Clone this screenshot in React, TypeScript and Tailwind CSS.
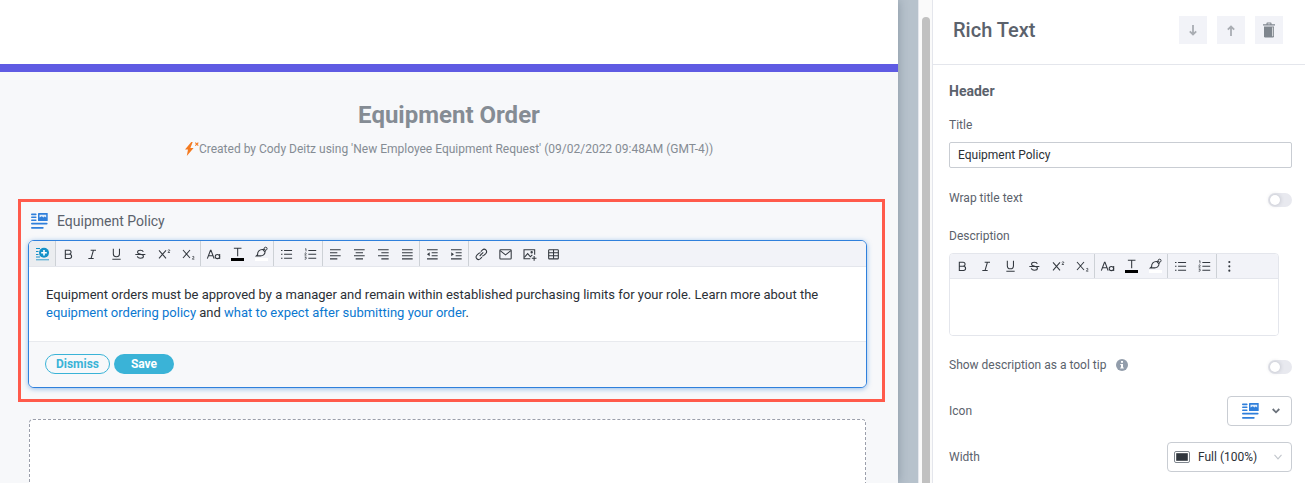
import React, { useState } from 'react';
import clsx from 'clsx';

type Tool = { label: string; icon: React.ReactNode; active?: boolean };

const glyph = (children: React.ReactNode) => (
  <svg
    viewBox="0 0 24 24"
    className="h-4 w-4 shrink-0"
    fill="none"
    stroke="currentColor"
    strokeWidth={1.6}
    aria-hidden="true"
  >
    {children}
  </svg>
);

const bold: Tool = {
  label: 'Bold',
  icon: glyph(<path d="M8 6.300h5.600a3 3 0 0 1 0 6H8zM8 12.300h6.200a3.200 3.200 0 0 1 0 6.400H8z" />),
};
const italic: Tool = { label: 'Italic', icon: glyph(<path d="M10 6.300h8M6.500 18.700h8M14.200 6.300l-3.600 12.400" />) };
const underline: Tool = {
  label: 'Underline',
  icon: glyph(<path d="M8 4.300v7.200a4.600 4.600 0 0 0 9.200 0V4.300M6.500 19.900H19" />),
};
const strike: Tool = {
  label: 'Strikethrough',
  icon: glyph(
    <path d="M5 12.700h15M16.900 8.800c-.3-1.700-2-2.500-4.200-2.500-2.600 0-4.400 1.100-4.400 2.900 0 1.500 1.300 2.300 3.600 2.900l2.100.6c2.100.5 3.200 1.300 3.200 2.600 0 1.900-1.800 3-4.500 3-2.500 0-4.400-1-4.700-2.900" />,
  ),
};
const superscript: Tool = {
  label: 'Superscript',
  icon: glyph(
    <>
      <path d="M4.500 6.500l10.500 12M15 6.500l-10.500 12" />
      <path d="M18 6.500c.3-1.200 2.700-1.200 2.600.2 0 1.100-2.300 1.500-2.600 3h3" strokeWidth={1.2} />
    </>,
  ),
};
const subscript: Tool = {
  label: 'Subscript',
  icon: glyph(
    <>
      <path d="M4.500 6l10.500 12M15 6l-10.500 12" />
      <path d="M18.500 16.500c.3-1.200 2.700-1.200 2.600.2 0 1.100-2.300 1.500-2.600 3h3" strokeWidth={1.2} />
    </>,
  ),
};
const fontFamily: Tool = {
  label: 'Font Family',
  icon: glyph(
    <>
      <path d="M3.500 19L8.200 6.500h.8L13.700 19M5.200 14.500h6.800" />
      <path d="M22 12v7.500" />
      <ellipse cx="18.600" cy="15.800" rx="3.300" ry="3.100" />
    </>,
  ),
};
const textColor: Tool = {
  label: 'Text Color',
  icon: glyph(
    <>
      <path d="M7.300 3.500h11.400M13 3.500v12" />
      <path d="M3 18h19.500v4.500H3z" fill="#000" stroke="none" />
    </>,
  ),
};
const backgroundColor: Tool = {
  label: 'Background Color',
  icon: glyph(
    <>
      <path d="M5 14.800l1.900-1.700c-.4-4.300 3-8.200 7.500-7.900l3.500 3.700c.5 3.500-3.400 6.300-7.300 5.900z" />
      <circle cx="18.900" cy="4" r="2.200" strokeWidth={1.5} />
      <path d="M14.700 5.300l2.400-.4M17.900 8.800l.7-2.600" />
      <path d="M3 18h19.500v4.500H3z" fill="#fff" stroke="none" />
    </>,
  ),
};
const bullets: Tool = {
  label: 'Unordered List',
  icon: glyph(<path d="M4.500 6.700h2.200M4.500 12.500h2.200M4.500 18.300h2.200M9.100 6.700h12M9.100 12.500h12M9.100 18.300h12" />),
};
const numbers: Tool = {
  label: 'Ordered List',
  icon: glyph(
    <>
      <path d="M9.500 6.700h11.800M9.500 12.500h11.800M9.500 18.300h11.800" />
      <path
        d="M4.500 4.800l1.500-.8v4M4 11c.3-1 2.400-1 2.300.2 0 .9-2 1.400-2.200 2.500h2.600M4 16.500h2.500l-1.300 1.500c2 .2 1.600 2.500-1.200 1.800"
        strokeWidth={1.1}
      />
    </>,
  ),
};
const alignLeft: Tool = { label: 'Align Left', icon: glyph(<path d="M4.500 5.500h16M4.500 10.100h11M4.500 14.700h16M4.500 19.300h11" />) };
const alignCenter: Tool = {
  label: 'Align Center',
  icon: glyph(<path d="M4.500 5.500h16M7 10.100h11M4.500 14.700h16M7 19.300h11" />),
};
const alignRight: Tool = { label: 'Align Right', icon: glyph(<path d="M4.500 5.500h16M9.500 10.100h11M4.500 14.700h16M9.500 19.300h11" />) };
const alignJustify: Tool = {
  label: 'Align Justify',
  icon: glyph(<path d="M4.500 5.500h16M4.500 10.100h16M4.500 14.700h16M4.500 19.300h16" />),
};
const outdent: Tool = {
  label: 'Decrease Indent',
  icon: glyph(
    <>
      <path d="M4.500 5.500h16M11.500 10.100h9M11.500 14.700h9M4.500 19.300h16" />
      <path d="M8.500 9.300v6.200l-4-3.100z" fill="currentColor" stroke="none" />
    </>,
  ),
};
const indent: Tool = {
  label: 'Increase Indent',
  icon: glyph(
    <>
      <path d="M4.500 5.500h16M11.500 10.100h9M11.500 14.700h9M4.500 19.300h16" />
      <path d="M4.900 9.300v6.200l4-3.100z" fill="currentColor" stroke="none" />
    </>,
  ),
};
const link: Tool = {
  label: 'Insert Link',
  icon: glyph(
    <path d="M10 15l5.400-5.400M11.700 8.300l2.600-2.600a3.700 3.700 0 0 1 5.200 5.200l-3.200 3.100c-.8.700-1.700 1-2.600.9M13.500 16.700l-2.800 2.700a3.700 3.700 0 0 1-5.200-5.200l3.200-3.100c.8-.7 1.700-1 2.600-.9" />,
  ),
};
const mail: Tool = {
  label: 'Insert Email',
  icon: glyph(
    <>
      <rect x="4.300" y="5.500" width="17" height="14" rx="1.200" />
      <path d="M4.700 7l8.100 6.200L20.900 7" />
    </>,
  ),
};
const image: Tool = {
  label: 'Insert Image',
  icon: glyph(
    <>
      <path d="M14 19H4.500V5.500h16V13" />
      <path d="M5 17l5-5.500 4 4.600 3-2.800" />
      <circle cx="16" cy="9.300" r="1" />
      <path d="M19.700 15v7M16.200 18.500h7" />
    </>,
  ),
};
const table: Tool = {
  label: 'Insert Table',
  icon: glyph(
    <>
      <rect x="5.500" y="5.500" width="14.500" height="13.800" rx="1" />
      <path d="M5.500 10.100H20M5.500 14.700H20M12.800 5.500v13.800" />
    </>,
  ),
};
const more: Tool = {
  label: 'More',
  icon: glyph(
    <g fill="currentColor" stroke="none">
      <circle cx="12.500" cy="6" r="1.600" />
      <circle cx="12.500" cy="12.500" r="1.600" />
      <circle cx="12.500" cy="19" r="1.600" />
    </g>,
  ),
};
const insertField: Tool = {
  label: 'Insert Field',
  active: true,
  icon: (
    <svg viewBox="0 0 16 16" className="h-4 w-4 shrink-0 text-[#1491c8]" fill="none" stroke="currentColor" aria-hidden="true">
      <path d="M2 2.500h4M2 5.500h2.500M2 8.500h2.500M2 11h4" />
      <circle cx="10" cy="6.700" r="5" fill="currentColor" stroke="none" />
      <path d="M10 3.900v5.600M7.200 6.700h5.600" stroke="#fff" strokeWidth={1.6} />
      <path d="M2 13.700h13" strokeWidth={1.4} opacity={0.6} />
    </svg>
  ),
};

const textGroup = [bold, italic, underline, strike, superscript, subscript];
const colorGroup = [fontFamily, textColor, backgroundColor];
const listGroup = [bullets, numbers];

const fullToolbar = [
  [insertField],
  textGroup,
  colorGroup,
  listGroup,
  [alignLeft, alignCenter, alignRight, alignJustify],
  [outdent, indent],
  [link, mail, image, table],
];
const compactToolbar = [textGroup, colorGroup, listGroup, [more]];

function Toolbar({ groups, compact }: { groups: Tool[][]; compact?: boolean }) {
  return (
    <div role="toolbar" className="flex border-b border-[#e4e6ec] bg-[#f2f3f8] text-[#33383f]">
      {groups.map((tools, i) => (
        <div key={i} className={clsx('flex', i < groups.length - 1 && 'border-r border-[#cdd1d6]')}>
          {tools.map((tool) => (
            <button
              key={tool.label}
              type="button"
              title={tool.label}
              aria-label={tool.label}
              className={clsx(
                'flex items-center justify-center',
                compact ? 'h-6' : 'h-[25px]',
                tool.active ? 'w-[26px] bg-[#ebedf0]' : 'w-6',
              )}
            >
              {tool.icon}
            </button>
          ))}
        </div>
      ))}
    </div>
  );
}

function RichTextIcon({ className }: { className?: string }) {
  return (
    <svg viewBox="0 0 17 16" className={clsx('h-4 w-[17px] shrink-0 text-[#2f7fdb]', className)} aria-hidden="true">
      <g fill="currentColor">
        <rect x="0" y=".6" width="5.600" height="1.600" rx=".8" />
        <rect x="0" y="3.500" width="5.600" height="1.600" rx=".8" />
        <rect x="0" y="6.400" width="5.600" height="1.600" rx=".8" />
        <rect x="7" y="0" width="9.700" height="8" rx=".6" />
        <rect x="0" y="9.700" width="16.600" height="1.800" rx=".9" />
        <rect x="0" y="13.900" width="12.700" height="1.800" rx=".9" />
      </g>
      <path d="M8.500 4.600V1.700h6.700v2.900l-1.600-1.200-1.200 1-1.600-1.200z" fill="#fff" opacity=".85" />
    </svg>
  );
}

function Toggle({ id }: { id: string }) {
  const [on, setOn] = useState(false);
  return (
    <input
      id={id}
      type="checkbox"
      checked={on}
      onChange={(e) => setOn(e.target.checked)}
      className="mt-1 flex h-3.5 w-6 appearance-none items-center rounded-full bg-[#e8e9ef] px-0.5 before:h-2.5 before:w-2.5 before:rounded-full before:bg-white before:shadow-[0_0_4px_rgba(60,70,90,0.3)] checked:justify-end checked:bg-[#3ab3d7]"
    />
  );
}

function FormPreview() {
  return (
    <main className="z-10 flex min-w-0 flex-1 flex-col bg-[#f7f8fa] shadow-[0_0_10px_rgba(50,65,85,0.35)]">
      <div className="h-[72px] shrink-0 border-b-8 border-[#5f5be3] bg-white" />
      <header className="mt-[27px] text-center text-[#858c94]">
        <h1 className="text-2xl leading-8 font-bold">Equipment Order</h1>
        <p className="mt-2 flex items-center justify-center text-xs leading-5">
          <svg viewBox="0 0 14 14" className="h-3.5 w-3.5 shrink-0" aria-hidden="true">
            <path d="M6.300 0L0 7.600h3L1.800 14 8.600 5.900H5.400L7.700 0z" fill="#f47a20" />
            <path d="M10.300 .7l3 3M13.300 .7l-3 3" stroke="#f47a20" strokeWidth="1.100" />
          </svg>
          Created by Cody Deitz using 'New Employee Equipment Request' (09/02/2022 09:48AM (GMT-4))
        </p>
      </header>

      <section className="mt-10 mr-[13px] ml-[18px] border-3 border-[#ff5a4b] pt-[7px] pr-[15px] pb-[11px] pl-[7px]">
        <h2 className="flex items-center gap-[9px] pl-[3px] text-sm leading-6 text-[#5b626c]">
          <RichTextIcon />
          Equipment Policy
        </h2>
        <div className="mt-[7px] overflow-hidden rounded-md border border-[#2f80dc] bg-white shadow-[0_1px_5px_rgba(47,128,220,0.5)]">
          <Toolbar groups={fullToolbar} />
          <div
            role="textbox"
            aria-label="Rich text content"
            contentEditable
            suppressContentEditableWarning
            className="px-[17px] py-[19px] text-[13px] leading-[18px] text-[#2b3036] outline-none"
          >
            Equipment orders must be approved by a manager and remain within established purchasing limits for your
            role. Learn more about the{' '}
            <a href="#policy" className="text-[#0b78d0]">equipment ordering policy</a> and{' '}
            <a href="#expect" className="text-[#0b78d0]">what to expect after submitting your order</a>.
          </div>
          <footer className="flex gap-1 border-t border-[#e8eaee] bg-[#f7f8fa] px-4 pt-3 pb-[13px] text-xs font-bold">
            <button type="button" className="h-5 w-[65px] rounded-full border border-[#3ab3d7] text-[#3ab3d7]">
              Dismiss
            </button>
            <button type="button" className="h-5 w-[60px] rounded-full bg-[#3ab3d7] text-white">
              Save
            </button>
          </footer>
        </div>
      </section>

      <div className="mt-[17px] mr-8 ml-[29px] flex-1 rounded-t border border-b-0 border-dashed border-[#9b9fab] bg-white" />
    </main>
  );
}

const headerButton = 'flex h-7 w-7 items-center justify-center bg-[#f2f3f8]';

function SettingsPanel() {
  const [title, setTitle] = useState('Equipment Policy');
  return (
    <aside className="w-[373px] shrink-0 border-l border-[#e4e6ec] bg-white text-xs leading-5 text-[#5b626c]">
      <header className="flex h-[65px] items-center justify-between border-b border-[#e4e6ec] pr-[22px] pb-1 pl-5">
        <h2 className="text-xl font-medium">Rich Text</h2>
        <div className="flex gap-2.5">
          <button type="button" aria-label="Move down" className={headerButton}>
            <svg viewBox="0 0 12 12" className="h-3 w-3" fill="none" stroke="#a9adb3" strokeWidth="1.800">
              <path d="M6 1v9.500M2.800 7.300L6 10.500l3.200-3.200" />
            </svg>
          </button>
          <button type="button" aria-label="Move up" className={headerButton}>
            <svg viewBox="0 0 12 12" className="h-3 w-3" fill="none" stroke="#a9adb3" strokeWidth="1.800">
              <path d="M6 12V2.500M2.800 5.700L6 2.500l3.200 3.200" />
            </svg>
          </button>
          <button type="button" aria-label="Delete" className={headerButton}>
            <svg viewBox="0 0 12 16" className="h-4 w-3" fill="#7f868e">
              <path d="M0 2.200h3.500V1.300Q3.500.5 4.300.5h3.400q.8 0 .8.800v.9H12v1.200H0zM4.600 1.500v.7h2.800v-.7z" />
              <path d="M1 4.500h10v9.700q0 1.300-1.300 1.300H2.300Q1 15.500 1 14.200z" />
              <path d="M9.700 5.300v9" stroke="#fff" strokeWidth=".8" />
            </svg>
          </button>
        </div>
      </header>

      <div className="pt-4 pr-[13px] pl-4">
        <h3 className="text-sm leading-5 font-bold">Header</h3>

        <label htmlFor="title" className="mt-3.5 block">Title</label>
        <input
          id="title"
          value={title}
          onChange={(e) => setTitle(e.target.value)}
          className="mt-[7px] block h-[26px] w-full rounded-xs border border-[#c9cdd3] px-2 text-xs text-[#2b3036]"
        />

        <div className="mt-5 flex items-center justify-between">
          <label htmlFor="wrap">Wrap title text</label>
          <Toggle id="wrap" />
        </div>

        <label htmlFor="description" className="mt-[18px] block">Description</label>
        <div className="mt-[7px] mr-[13px] overflow-hidden rounded-sm border border-[#e4e6ec]">
          <Toolbar groups={compactToolbar} compact />
          <textarea id="description" className="block h-14 w-full resize-none bg-white p-2 text-[#2b3036]" />
        </div>

        <div className="mt-[19px] flex items-center justify-between">
          <label htmlFor="tooltip" className="flex items-center gap-2.5">
            Show description as a tool tip
            <svg viewBox="0 0 12 12" className="h-3 w-3" aria-hidden="true">
              <circle cx="6" cy="6" r="6" fill="#929dab" />
              <path d="M5 2h2v1.800H5zM4.300 4.900H7v3.700h.8v1H4.200v-1H5V5.900h-.7z" fill="#fff" />
            </svg>
          </label>
          <Toggle id="tooltip" />
        </div>

        <div className="mt-[21px] flex items-center justify-between">
          <span id="icon-label">Icon</span>
          <button
            type="button"
            aria-haspopup="listbox"
            aria-labelledby="icon-label"
            className="flex h-[30px] w-[65px] items-center justify-between rounded-sm border border-[#c9cdd3] pr-[11px] pl-3.5"
          >
            <RichTextIcon />
            <svg viewBox="0 0 8 6" className="h-1.5 w-2" fill="none" stroke="#6b727b" strokeWidth="1.800" aria-hidden="true">
              <path d="M.7 1L4 4.300 7.300 1" />
            </svg>
          </button>
        </div>

        <div className="mt-4 flex items-center justify-between">
          <label htmlFor="width">Width</label>
          <div className="relative w-[125px]">
            <select
              id="width"
              defaultValue="full"
              className="h-[30px] w-full appearance-none rounded-sm border border-[#c9cdd3] bg-white pl-[30px] text-xs text-[#2b3036]"
            >
              <option value="full">Full (100%)</option>
              <option value="half">Half (50%)</option>
            </select>
            <svg
              viewBox="0 0 16 12"
              className="pointer-events-none absolute top-[9px] left-[7px] h-3 w-4"
              fill="none"
              aria-hidden="true"
            >
              <rect x=".5" y=".5" width="15" height="11" rx="1.500" stroke="#7f868e" />
              <rect x="2.200" y="2.200" width="11.600" height="7.600" fill="#30363d" />
            </svg>
            <svg
              viewBox="0 0 8 6"
              className="pointer-events-none absolute top-3 right-2.5 h-1.5 w-2"
              fill="none"
              stroke="#c2c6cc"
              strokeWidth="1.100"
              aria-hidden="true"
            >
              <path d="M.5 .8L4 4.800 7.500 .8" />
            </svg>
          </div>
        </div>
      </div>
    </aside>
  );
}

export default function App() {
  return (
    <div className="flex h-screen overflow-hidden bg-[#b7c2cc] font-['Roboto',sans-serif]">
      <FormPreview />
      <div className="w-5 shrink-0" />
      <div className="flex w-3.5 shrink-0 justify-center border-l border-[#e4e6ec] bg-[#fafafa] pt-[17px]">
        <div className="w-2 rounded-t-full bg-[#c1c1c1]" />
      </div>
      <SettingsPanel />
    </div>
  );
}
